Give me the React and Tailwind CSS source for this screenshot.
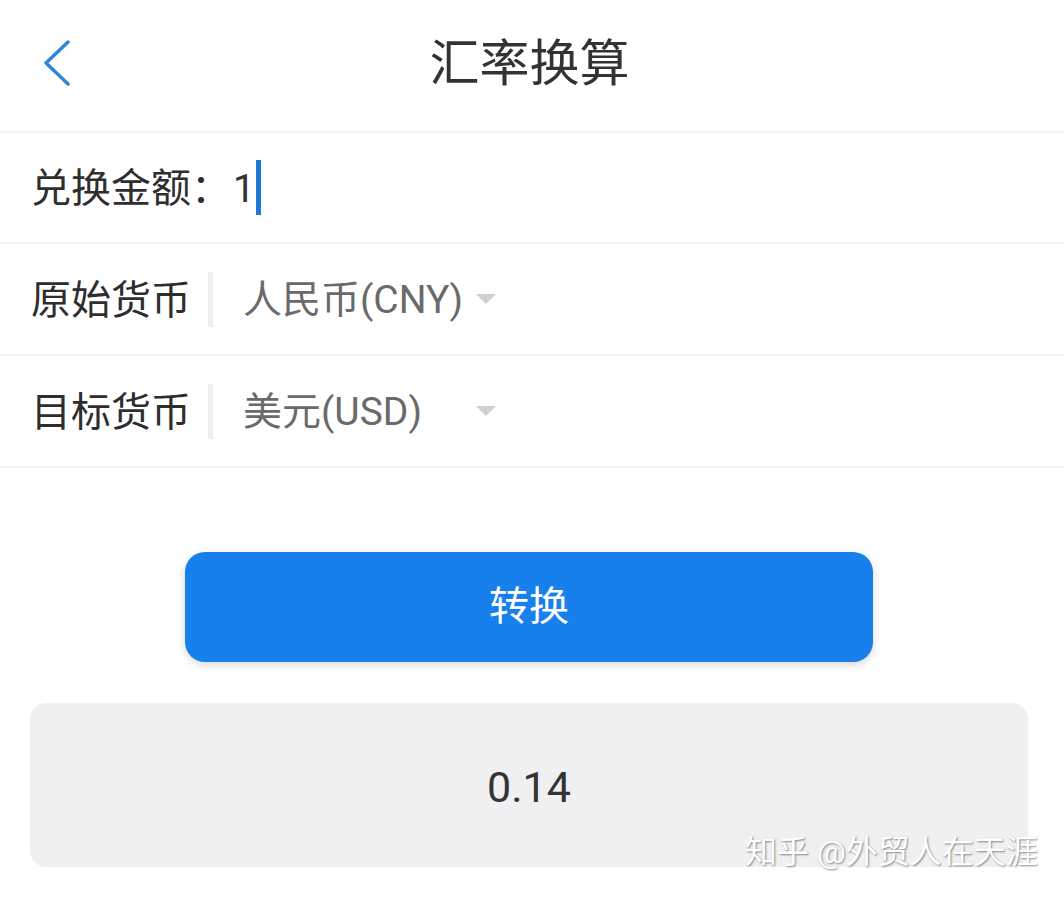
import { useState } from 'react';

const font = { fontFamily: '"Roboto", "Noto Sans CJK SC", sans-serif' };

function Caret() {
  return (
    <svg width="20" height="11" viewBox="0 0 20 11" className="shrink-0">
      <path d="M0 0 L20 0 L10 10 Z" fill="#cfcfd2" />
    </svg>
  );
}

function SelectRow({ label, value }) {
  return (
    <div className="flex items-center h-[112px] border-b-2 border-[#f1f1f3] pl-[31px]">
      <span className="text-[40px] text-[#2e2e2e] leading-none w-[177px] mt-[3px]">{label}</span>
      <div className="w-[5px] h-[55px] bg-[#efeff1]" />
      <div className="flex items-center w-[283px] pl-[30px] justify-between">
        <span className="text-[39px] text-[#6a6a6a] leading-none mt-[3px]">{value}</span>
        <Caret />
      </div>
    </div>
  );
}

export default function App() {
  const [amount] = useState('1');

  return (
    <div className="w-[1064px] h-[901px] bg-white relative overflow-hidden" style={font}>
      {/* header */}
      <div className="relative flex items-center justify-center h-[133px] border-b-2 border-[#f3f3f5]">
        <svg className="absolute left-[42px] top-[40px]" width="30" height="46" viewBox="0 0 30 46">
          <path d="M26 2 L4 23 L26 44" fill="none" stroke="#2f86d6" strokeWidth="3.5" strokeLinecap="round" strokeLinejoin="round" />
        </svg>
        <h1 className="text-[50px] text-[#333] leading-none mt-[-4px] ml-[-5px]">汇率换算</h1>
      </div>

      {/* amount */}
      <div className="flex items-center h-[111px] border-b-2 border-[#f1f1f3] pl-[31px]">
        <span className="text-[40px] text-[#2e2e2e] leading-none mt-[3px]">兑换金额：</span>
        <span className="text-[39px] text-[#333] leading-none ml-[2px] mt-[3px]">{amount}</span>
        <div className="w-[5px] h-[55px] bg-[#1f78d1] ml-[1px]" />
      </div>

      <SelectRow label="原始货币" value="人民币(CNY)" />
      <SelectRow label="目标货币" value="美元(USD)" />

      {/* button */}
      <div className="pt-[84px] pl-[185px]">
        <button className="w-[688px] h-[110px] rounded-[20px] bg-[#1780ec] text-white text-[40px] leading-none shadow-[0_3px_8px_rgba(0,0,0,0.15)]">
          转换
        </button>
      </div>

      {/* result */}
      <div className="mx-[30px] mt-[41px] w-[998px] h-[164px] rounded-[16px] bg-[#f0f0f2] flex items-center justify-center">
        <span className="text-[43px] text-[#333] leading-none mt-[4px]">0.14</span>
      </div>

      <div
        className="absolute left-[745px] top-[836px] text-[32px] text-white leading-none"
        style={{ textShadow: '1px 1px 2px rgba(0,0,0,0.45)' }}
      >
        知乎 @外贸人在天涯
      </div>
    </div>
  );
}
